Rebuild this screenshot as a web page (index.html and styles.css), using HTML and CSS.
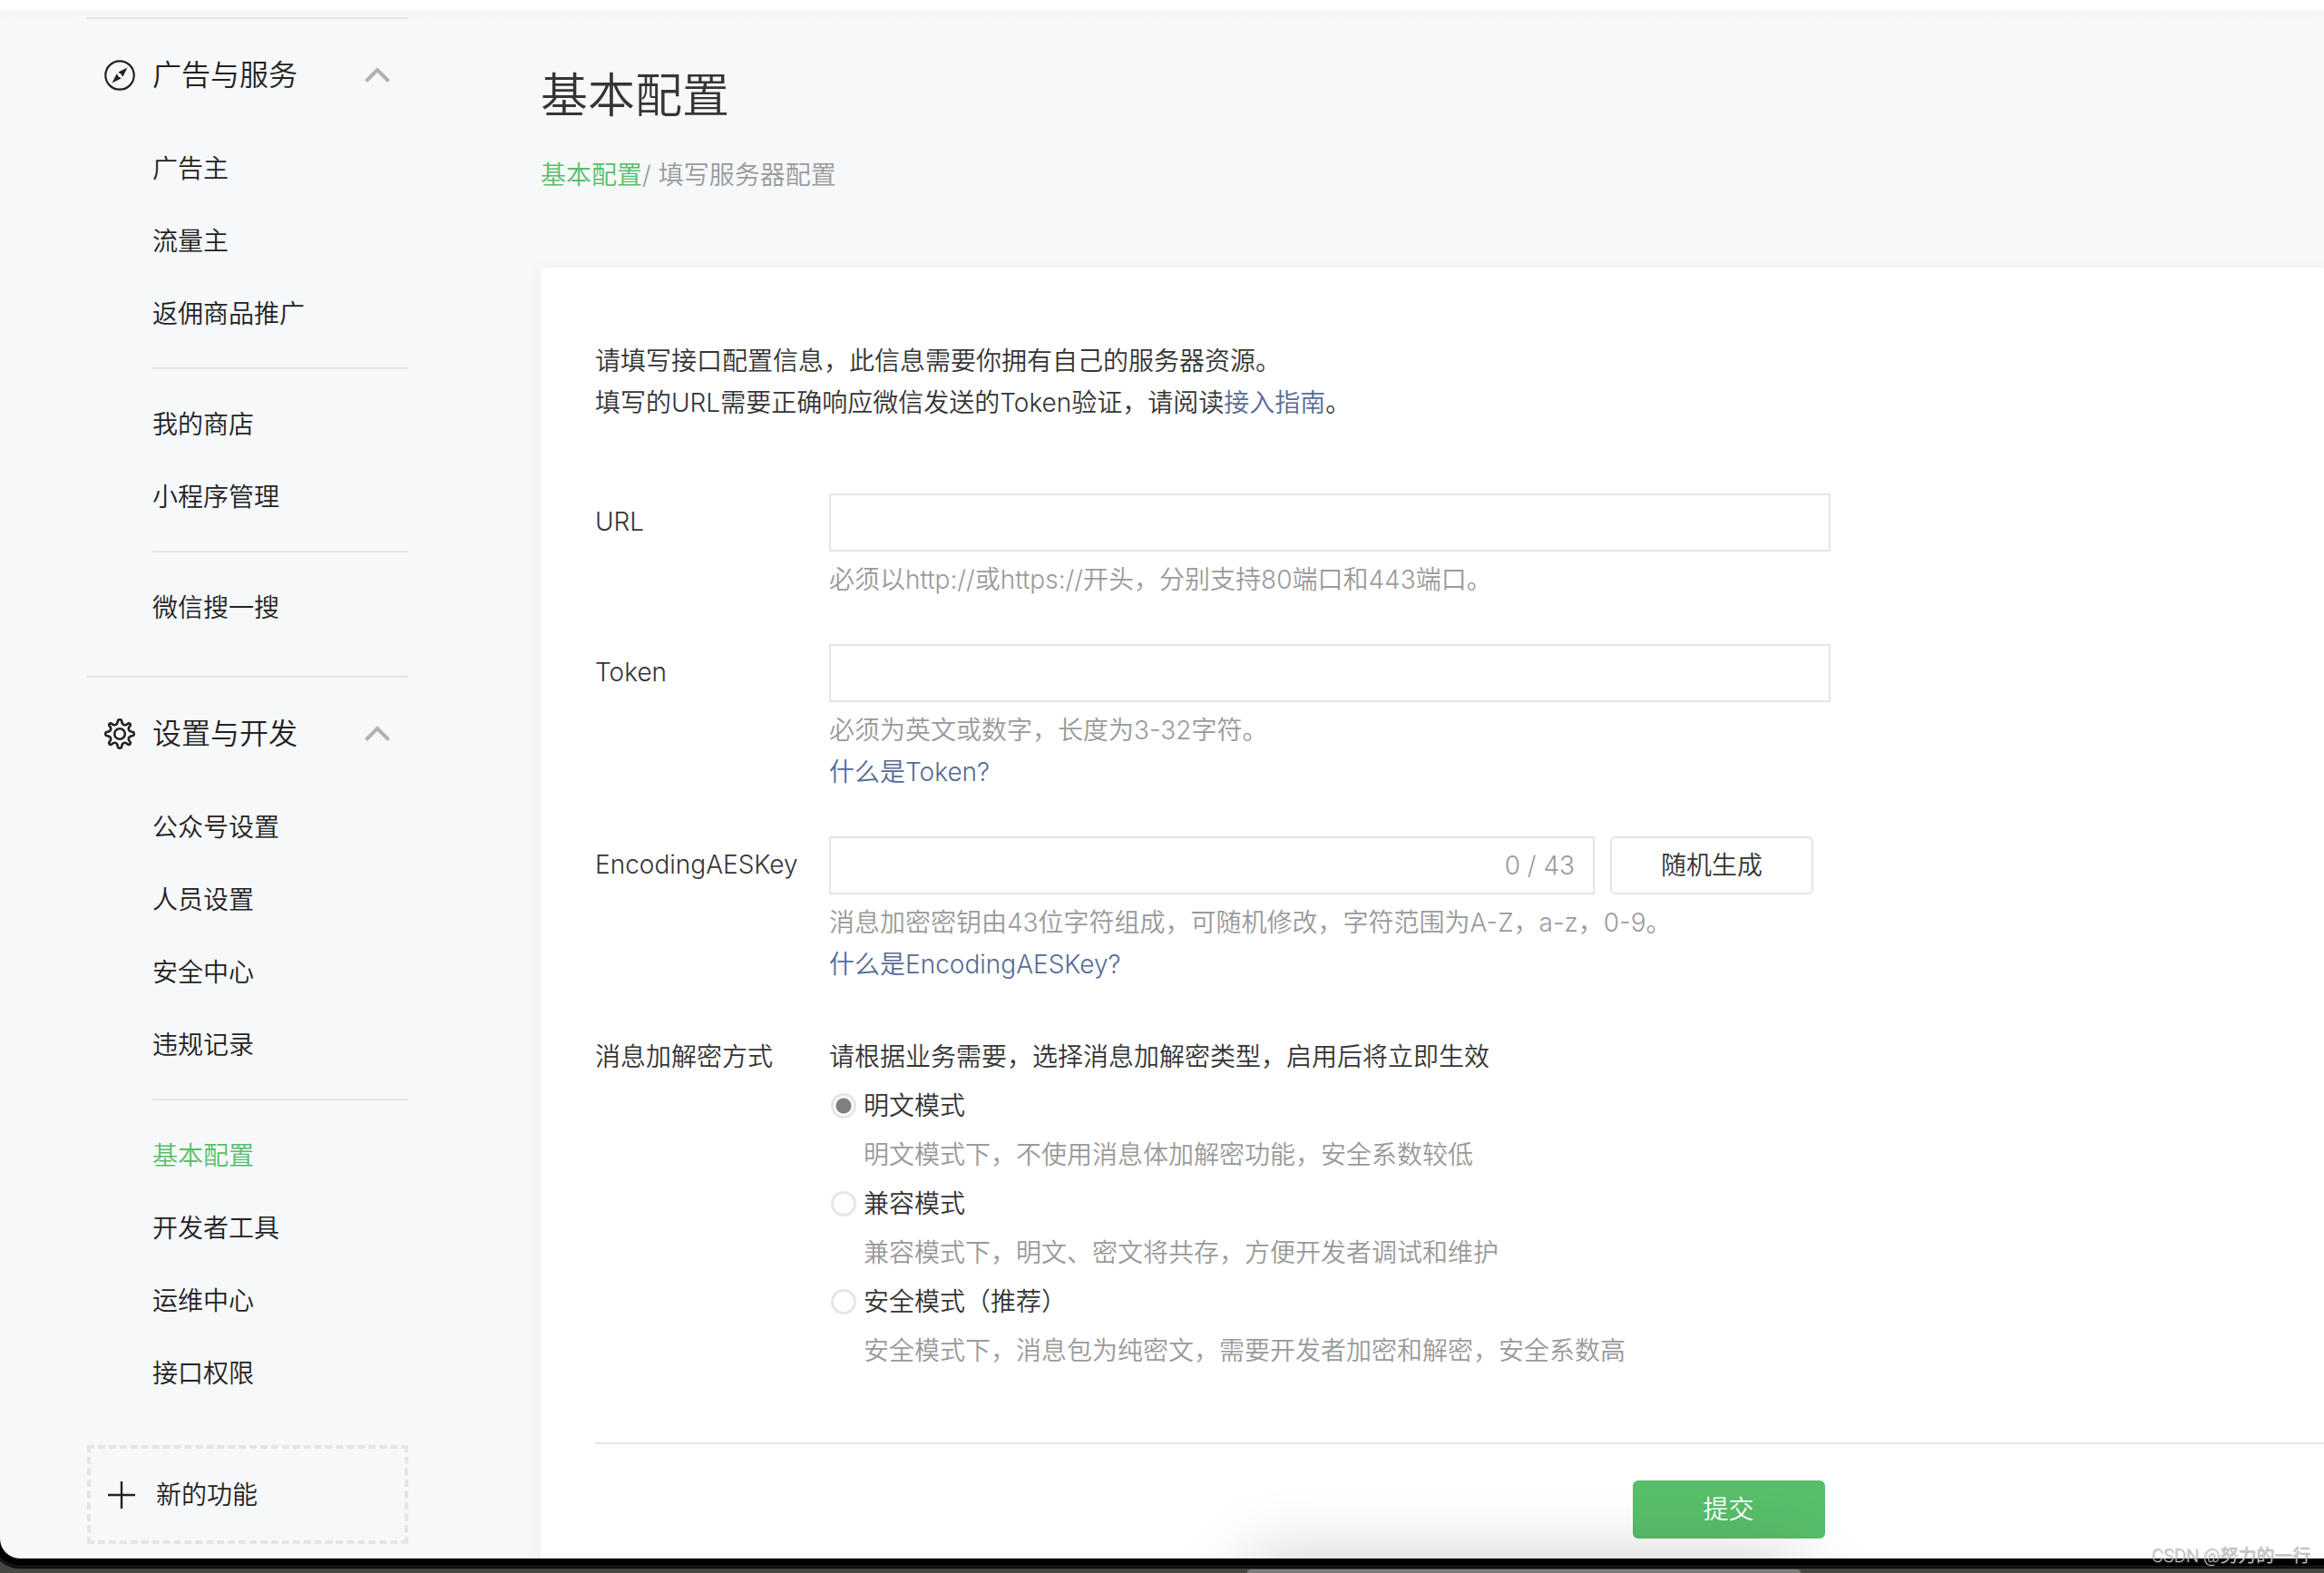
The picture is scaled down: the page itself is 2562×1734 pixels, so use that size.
FILE: index.html
```html
<!DOCTYPE html>
<html lang="zh-CN">
<head>
<meta charset="utf-8">
<meta name="viewport" content="width=device-width, initial-scale=1">
<title>基本配置</title>
<link rel="stylesheet" href="styles.css">
</head>
<body>
<div class="desktop">
  <div class="window">
    <aside class="sidebar">
      <nav class="group">
        <button class="group-head" type="button">
          <svg class="icon" viewBox="0 0 34 34" aria-hidden="true"><circle cx="17" cy="17" r="15.7" fill="none" stroke="#222" stroke-width="2.2"/><path d="M25.500 8.500L20.500 18.500L15.500 13.500Z" fill="#222"/><path d="M8.500 25.500L13.500 15.500L18.500 20.500Z" fill="#222"/><circle cx="17" cy="17" r="2" fill="#f7f8fa"/></svg>
          <span class="group-name">广告与服务</span>
          <svg class="chevron" viewBox="0 0 28 18" aria-hidden="true"><path d="M1.500 15.500L14 3L26.500 15.500" fill="none" stroke="#b0b1b3" stroke-width="4"/></svg>
        </button>
        <ul class="menu">
          <li><a href="#">广告主</a></li>
          <li><a href="#">流量主</a></li>
          <li><a href="#">返佣商品推广</a></li>
        </ul>
        <ul class="menu">
          <li><a href="#">我的商店</a></li>
          <li><a href="#">小程序管理</a></li>
        </ul>
        <ul class="menu">
          <li><a href="#">微信搜一搜</a></li>
        </ul>
      </nav>
      <nav class="group">
        <button class="group-head" type="button">
          <svg class="icon" viewBox="0 0 34 34" aria-hidden="true"><g fill="none" stroke="#222" stroke-width="2.6" stroke-linejoin="round"><circle cx="17" cy="17" r="5.800"/><path d="M14.800 3.200Q14.800 1.200 17 1.200Q19.200 1.200 19.200 3.200Q19.500 6.400 21.600 7.100Q23.700 7.700 25.300 6.200Q27 4.600 28.300 5.800Q29.500 7 28 8.700Q26.200 10.700 27 12.600Q27.800 14.600 30.800 14.800Q32.800 14.800 32.800 17Q32.800 19.200 30.800 19.200Q27.800 19.400 27 21.400Q26.200 23.300 28 25.300Q29.500 27 28.300 28.300Q27 29.500 25.300 28Q23.600 26.300 21.600 26.900Q19.500 27.700 19.200 30.800Q19.200 32.800 17 32.800Q14.800 32.800 14.800 30.800Q14.500 27.700 12.400 26.900Q10.400 26.300 8.700 28Q7 29.500 5.700 28.300Q4.500 27 6 25.300Q7.800 23.300 7 21.400Q6.200 19.400 3.200 19.200Q1.200 19.200 1.200 17Q1.200 14.800 3.200 14.800Q6.200 14.600 7 12.600Q7.800 10.700 6 8.700Q4.500 7 5.700 5.800Q7 4.600 8.700 6.200Q10.300 7.700 12.400 7.100Q14.500 6.400 14.800 3.200Z"/></g></svg>
          <span class="group-name">设置与开发</span>
          <svg class="chevron" viewBox="0 0 28 18" aria-hidden="true"><path d="M1.500 15.500L14 3L26.500 15.500" fill="none" stroke="#b0b1b3" stroke-width="4"/></svg>
        </button>
        <ul class="menu">
          <li><a href="#">公众号设置</a></li>
          <li><a href="#">人员设置</a></li>
          <li><a href="#">安全中心</a></li>
          <li><a href="#">违规记录</a></li>
        </ul>
        <ul class="menu">
          <li><a class="current" href="#" aria-current="page">基本配置</a></li>
          <li><a href="#">开发者工具</a></li>
          <li><a href="#">运维中心</a></li>
          <li><a href="#">接口权限</a></li>
        </ul>
      </nav>
      <button class="new-feature" type="button">
        <svg class="plus" viewBox="0 0 30 30" aria-hidden="true"><path d="M15 0V30M0 15H30" stroke="#222" stroke-width="2.400"/></svg>
        <span>新的功能</span>
      </button>
    </aside>

    <main class="main">
      <h1 class="title">基本配置</h1>
      <div class="crumbs"><a href="#">基本配置</a>/ 填写服务器配置</div>
      <form class="card">
        <p class="intro">请填写接口配置信息，此信息需要你拥有自己的服务器资源。<br>填写的URL需要正确响应微信发送的Token验证，请阅读<a href="#">接入指南</a>。</p>

        <div class="row">
          <label class="label" for="url">URL</label>
          <div class="field">
            <input class="box" id="url" type="text">
            <p class="hint">必须以http://或https://开头，分别支持80端口和443端口。</p>
          </div>
        </div>

        <div class="row">
          <label class="label" for="token">Token</label>
          <div class="field">
            <input class="box" id="token" type="text">
            <p class="hint">必须为英文或数字，长度为3-32字符。<br><a href="#">什么是Token?</a></p>
          </div>
        </div>

        <div class="row">
          <label class="label" for="aes">EncodingAESKey</label>
          <div class="field">
            <div class="key-line">
              <div class="box counted">
                <input class="bare" id="aes" type="text" maxlength="43">
                <span class="count">0 / 43</span>
              </div>
              <button class="random" type="button">随机生成</button>
            </div>
            <p class="hint">消息加密密钥由43位字符组成，可随机修改，字符范围为A-Z，a-z，0-9。<br><a href="#">什么是EncodingAESKey?</a></p>
          </div>
        </div>

        <div class="row">
          <div class="label" id="mode-label">消息加解密方式</div>
          <div class="field modes" role="radiogroup" aria-labelledby="mode-label">
            <p>请根据业务需要，选择消息加解密类型，启用后将立即生效</p>
            <div class="mode">
              <label><input type="radio" name="mode" checked>明文模式</label>
              <p class="desc">明文模式下，不使用消息体加解密功能，安全系数较低</p>
            </div>
            <div class="mode">
              <label><input type="radio" name="mode">兼容模式</label>
              <p class="desc">兼容模式下，明文、密文将共存，方便开发者调试和维护</p>
            </div>
            <div class="mode">
              <label><input type="radio" name="mode">安全模式（推荐）</label>
              <p class="desc">安全模式下，消息包为纯密文，需要开发者加密和解密，安全系数高</p>
            </div>
          </div>
        </div>

        <div class="actions"><button class="submit" type="submit">提交</button></div>
      </form>
    </main>
    <div class="dock-shadow"></div>
  </div>
  <div class="dock"></div>
  <div class="watermark">CSDN @努力的一行</div>
</div>
</body>
</html>
```

FILE: styles.css
```css
* { box-sizing: border-box; }

body {
  margin: 0;
  background: #474642;
  color: #353535;
  font-family: Inter, "Noto Sans CJK SC", sans-serif;
  font-size: 28px;
  font-weight: 350;
  line-height: 46px;
}

p, h1, ul { margin: 0; padding: 0; }
ul { list-style: none; }
a { color: #576b95; text-decoration: none; }
button, input { font: inherit; color: inherit; }

.desktop {
  position: relative;
  height: 100vh;
  padding-bottom: 16px;
  display: flex;
  flex-direction: column;
  overflow: hidden;
}

.window {
  position: relative;
  flex: 1;
  display: flex;
  min-height: 0;
  overflow: hidden;
  border-top: 12px solid #fff;
  border-bottom-left-radius: 22px;
  background: linear-gradient(#f4f5f7, #f7f8fa 10px);
  box-shadow: 0 0 0 8px #000, 0 0 0 10px #1c1c1c, 0 0 0 11px #000;
}

/* Sidebar */
.sidebar {
  flex: none;
  width: 596px;
  padding: 7px 146px 0 96px;
  color: #222;
}

.group {
  border-top: 2px solid #e4e5e7;
  padding-bottom: 36px;
}

.group-head {
  display: flex;
  align-items: center;
  width: 100%;
  height: 124px;
  padding: 0 20px 0 19px;
  border: 0;
  background: none;
  font-size: 32px;
  text-align: left;
}

.icon { width: 34px; height: 34px; margin-right: 19px; }
.group-name { flex: 1; }
.chevron { width: 28px; height: 18px; }

.menu { margin-left: 72px; }
.menu + .menu {
  margin-top: 20px;
  padding-top: 20px;
  border-top: 2px solid #e4e5e7;
}
.menu a {
  display: flex;
  align-items: center;
  height: 80px;
  padding-top: 2px;
  color: #222;
}
.menu a.current { color: #58be6a; }

.new-feature {
  display: flex;
  align-items: center;
  gap: 23px;
  width: 100%;
  height: 109px;
  margin-top: 4px;
  padding: 0 19px;
  border: 4px dashed #e4e5e7;
  background: none;
}
.plus { width: 30px; height: 30px; }

/* Main column */
.main {
  flex: 1;
  min-width: 0;
  display: flex;
  flex-direction: column;
}

.title {
  padding-top: 54px;
  font-size: 52px;
  font-weight: 350;
  line-height: 80px;
}

.crumbs {
  margin: 24px 0 79px;
  color: #9a9a9a;
}
.crumbs a { color: #58be6a; }

.card {
  flex: 1;
  padding: 80px 0 0 60px;
  border-top-left-radius: 6px;
  background: #fff;
  box-shadow: 0 2px 20px rgba(0, 0, 0, 0.05);
}

.intro { margin-bottom: 77px; }

.row { display: flex; margin-bottom: 48px; }
.label { flex: none; width: 258px; padding-top: 8px; }
.field { flex: 1; max-width: 1104px; }

.box {
  display: block;
  width: 100%;
  height: 64px;
  padding: 0 20px;
  border: 2px solid #e4e4ea;
  background: #fff;
}

.hint { padding-top: 8px; color: #9a9a9a; line-height: 46px; }

.key-line { display: flex; gap: 17px; padding-right: 19px; }
.counted { display: flex; flex: 1; align-items: center; }
.bare { flex: 1; min-width: 0; border: 0; outline: 0; background: none; }
.count { color: #9a9a9a; }

.random {
  width: 224px;
  height: 64px;
  border: 2px solid #e4e4ea;
  border-radius: 6px;
  background: #fff;
}

.modes { padding-top: 8px; }
.mode { margin-top: 8px; }
.mode label { display: flex; align-items: center; gap: 8px; }
.mode input {
  appearance: none;
  width: 28px;
  height: 28px;
  margin: 0 0 0 2px;
  border: 3px solid #e6e6ea;
  border-radius: 50%;
  background: #fff;
}
.mode input:checked { background: radial-gradient(circle, #808080 8px, #fff 9px); }
.desc { margin-top: 8px; padding-left: 38px; color: #9a9a9a; }

.actions {
  margin-top: 78px;
  padding: 40px 0 22px 60%;
  border-top: 2px solid #e4e4ea;
}
.submit {
  display: block;
  width: 212px;
  height: 64px;
  border: 0;
  border-radius: 6px;
  background: #58be6a;
  color: #fff;
}

/* What lies behind the bottom edge of the window */
.dock {
  position: absolute;
  bottom: 0;
  left: 1375px;
  width: 610px;
  height: 4px;
  border-radius: 6px 6px 0 0;
  background: #7f7d7b;
}

.dock-shadow {
  position: absolute;
  top: 100%;
  left: 1375px;
  width: 610px;
  height: 200px;
  box-shadow: 0 0 80px rgba(0, 0, 0, 0.2);
}

.watermark {
  position: absolute;
  right: 15px;
  bottom: 4px;
  color: #c8c8c8;
  font-family: Roboto, "Noto Sans CJK SC", sans-serif;
  font-size: 20px;
  line-height: 30px;
  text-shadow: 1px 1px 1px rgba(90, 90, 90, 0.5);
}
```
